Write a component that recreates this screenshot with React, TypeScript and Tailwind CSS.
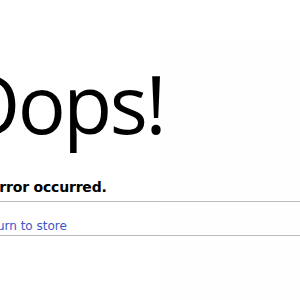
export default function App() {
  return (
    <div className="relative w-[300px] h-[300px] overflow-hidden bg-white">
      <div className="absolute left-[160px] top-[40px] w-[140px] h-[260px] bg-[#fefefe]" />
      <div className="relative flex flex-col pt-[48px]">
        <div
          className="ml-[-42px] h-[110px] text-[80px] leading-[110px] text-black whitespace-nowrap font-medium"
          style={{ fontFamily: '"Open Sans", sans-serif', letterSpacing: '-2.5px' }}
        >
          Oops!
        </div>
        <div
          className="ml-[-35px] mt-[20px] text-[14px] font-bold text-black whitespace-nowrap leading-[18px]"
          style={{ fontFamily: '"DejaVu Sans", sans-serif', letterSpacing: '-0.2px' }}
        >
          An error occurred.
        </div>
        <div className="mt-[5px] h-px bg-[#bcbcbc]" />
        <div
          className="ml-[-23px] mt-[16px] text-[12px] text-[#3b55c8] whitespace-nowrap leading-[16px]"
          style={{ fontFamily: '"DejaVu Sans", sans-serif' }}
        >
          Return to store
        </div>
        <div className="mt-[1px] h-px bg-[#bcbcbc]" />
      </div>
    </div>
  );
}
